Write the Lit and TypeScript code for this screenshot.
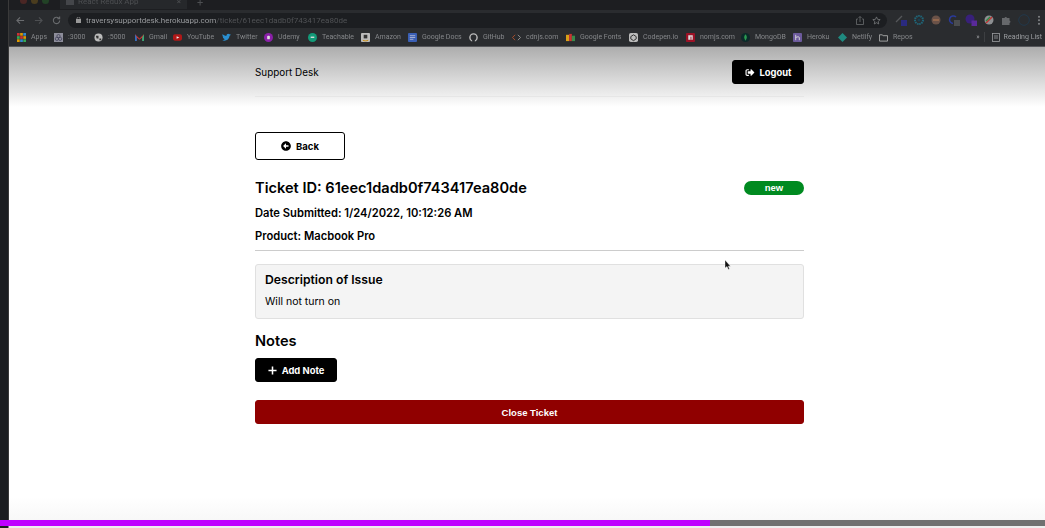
import { LitElement, html, css, svg } from "lit";
import { customElement } from "lit/decorators.js";

const bookmarks: [string, string, number][] = [
  ["Apps", "apps", 37],
  [":3000", "hex", 40],
  [":5000", "globe", 41],
  ["Gmail", "gmail", 38],
  ["YouTube", "yt", 49],
  ["Twitter", "tw", 42],
  ["Udemy", "ud", 44],
  ["Teachable", "te", 53],
  ["Amazon", "am", 47],
  ["Google Docs", "docs", 61],
  ["GitHub", "gh", 43],
  ["cdnjs.com", "code", 54],
  ["Google Fonts", "gf", 63],
  ["Codepen.io", "cp", 57],
  ["nomjs.com", "npm", 55],
  ["MongoDB", "mongo", 52],
  ["Heroku", "her", 45],
  ["Netlify", "net", 41],
  ["Repos", "folder", 40],
];

function favicon(k: string) {
  const shapes: Record<string, unknown> = {
    apps: svg`<rect x="0" y="0" width="3" height="3" fill="#c33"/><rect x="3.500" y="0" width="3" height="3" fill="#d90"/><rect x="7" y="0" width="3" height="3" fill="#38c"/><rect x="0" y="3.500" width="3" height="3" fill="#3a5"/><rect x="3.500" y="3.500" width="3" height="3" fill="#c33"/><rect x="7" y="3.500" width="3" height="3" fill="#d90"/><rect x="0" y="7" width="3" height="3" fill="#d90"/><rect x="3.500" y="7" width="3" height="3" fill="#38c"/><rect x="7" y="7" width="3" height="3" fill="#3a5"/>`,
    hex: svg`<rect width="10" height="10" fill="#8d8d9a"/><circle cx="5" cy="3.500" r="1.800" fill="none" stroke="#3a3a55" stroke-width=".8"/><circle cx="3.200" cy="6.500" r="1.800" fill="none" stroke="#3a3a55" stroke-width=".8"/><circle cx="6.800" cy="6.500" r="1.800" fill="none" stroke="#3a3a55" stroke-width=".8"/>`,
    globe: svg`<circle cx="5" cy="5" r="4.500" fill="#bbb"/><path d="M2 3h3v3H3zM6 6h2v2H6z" fill="#333"/>`,
    gmail: svg`<path d="M0 1.500 5 6l5-4.500V9H8V5L5 7.500 2 5v4H0z" fill="#c33"/><path d="M8 9V5l2-3.500V9z" fill="#3a7"/><path d="M0 9V1.500L2 5v4z" fill="#2f6fc0"/>`,
    yt: svg`<rect y="1.500" width="10" height="7" rx="2" fill="#b01818"/><path d="M4 3.500 7 5 4 6.500z" fill="#eee"/>`,
    tw: svg`<path d="M0 8c4 1.500 8-.5 8.500-5L10 2 8.500 1.500C7 0 5 1 5 3 3 3 1.500 2 .7 1c-.5 1.500 0 3 1 3.500L1 4.500C1 5.500 2 6.500 3 7 2 8 1 8 0 8z" fill="#2a8fd0"/>`,
    ud: svg`<circle cx="5" cy="5" r="5" fill="#8a1fa8"/><rect x="3.500" y="3" width="3" height="4" rx="1" fill="#ddd"/>`,
    te: svg`<circle cx="5" cy="5" r="5" fill="#129a78"/><rect x="3" y="4" width="4" height="1.500" fill="#ddd"/>`,
    am: svg`<rect width="10" height="10" rx="1" fill="#bbb"/><rect x="3" y="2" width="4" height="4" fill="#333"/><path d="M2 8c2 1 4 1 6 0" stroke="#c80" fill="none"/>`,
    docs: svg`<rect width="10" height="10" rx="1" fill="#3a5fb5"/><path d="M2 3h6M2 5h6M2 7h4" stroke="#ccd" stroke-width=".8"/>`,
    gh: svg`<circle cx="5" cy="5" r="4" fill="none" stroke="#bbb" stroke-width="1.600"/><rect x="3.500" y="7" width="3" height="3" fill="#2a2c2f"/>`,
    code: svg`<path d="M3.500 2 .5 5l3 3" stroke="#b5532c" fill="none"/><path d="M6.500 2l3 3-3 3" stroke="#999" fill="none"/>`,
    gf: svg`<rect y="2" width="3.500" height="7" fill="#d9a018"/><rect x="3.500" y="1" width="3" height="8" fill="#c33"/><rect x="6.500" y="3" width="3.500" height="6" fill="#3a8a4a"/>`,
    cp: svg`<rect width="10" height="10" rx="2" fill="#bbb"/><path d="M5 2 8 4v2.500L5 8.500 2 6.500V4z" fill="none" stroke="#222"/>`,
    npm: svg`<rect width="10" height="10" rx="1" fill="#9c1226"/><rect x="2.500" y="2.500" width="5" height="5" fill="#ddd"/><rect x="5" y="4" width="1" height="3.500" fill="#9c1226"/>`,
    mongo: svg`<circle cx="5" cy="5" r="5" fill="#0c2a2a"/><path d="M5 1.500c2 2 2 4.500 0 7-2-2.500-2-5 0-7z" fill="#2a9a50"/>`,
    her: svg`<rect width="10" height="10" rx="1" fill="#6c5a9c"/><path d="M3 2v6M3 5c2-1 4-1 4 0v3" stroke="#ddd" fill="none"/>`,
    net: svg`<path d="M5 0l5 5-5 5-5-5z" fill="#1f8a80"/>`,
    folder: svg`<path d="M.5 2h3l1 1h5v6H.5z" fill="none" stroke="#aaa"/>`,
  };
  return svg`<svg class="fav" viewBox="0 0 10 10" width="9" height="9">${shapes[k]}</svg>`;
}

@customElement("app-root")
export class AppRoot extends LitElement {
  static styles = css`
    :host { display: block; width: 1045px; height: 528px; overflow: hidden; position: relative; background: #fff; font-family: Inter, "Liberation Sans", sans-serif; color: #000; }
    .chrome { height: 47px; background: #2a2c2f; display: flex; flex-direction: column; filter: blur(0.65px); overflow: hidden; }
    .tabs { height: 10px; background: #1d1e21; display: flex; align-items: flex-start; flex: none; overflow: hidden; }
    .lights { display: flex; gap: 4px; padding: 0 0 0 20px; width: 40px; margin-top: -3px; flex: none; box-sizing: content-box; }
    .lights i { width: 7px; height: 7px; border-radius: 50%; display: block; }
    .tab { width: 127px; height: 9px; background: #26282b; display: flex; align-items: center; gap: 4px; padding: 0 6px; box-sizing: border-box; font: 8px/8px Roboto, sans-serif; color: #4d4f52; }
    .tab .t { flex: 1; margin-top: -6px; white-space: nowrap; }
    .tab .ic { width: 8px; height: 5px; background: #44464a; flex: none; align-self: flex-start; }
    .tab .x { margin-top: -6px; }
    .plus { margin-left: 10px; color: #4d4f52; font: 11px/6px Roboto, sans-serif; }
    .toolbar { height: 18px; display: flex; align-items: center; flex: none; padding: 2px 0 0 16px; box-sizing: border-box; color: #77797c; }
    .nav { display: flex; gap: 9px; width: 52px; flex: none; align-items: center; }
    .url { width: 819px; height: 15px; background: #1c1e21; border-radius: 8px; display: flex; align-items: center; padding: 0 6px 0 8px; box-sizing: border-box; font: 8px Roboto, sans-serif; color: #989a9d; white-space: nowrap; gap: 3px; flex: none; }
    .url em { font-style: normal; color: #505255; }
    .url .tools { margin-left: auto; display: flex; gap: 8px; align-items: center; }
    .ext { display: flex; align-items: center; gap: 5.500px; margin-left: 8px; }
    .ext svg { display: block; flex: none; }
    .dots { width: 2px; height: 10px; margin-left: 3px; background: radial-gradient(circle, #77797c 1px, transparent 1.100px) 0 0 / 2px 3.500px; }
    .marks { flex: 1; border-bottom: 1px solid #55565a; display: flex; align-items: center; padding-left: 17px; font: 7px Roboto, sans-serif; color: #85878a; white-space: nowrap; }
    .mark { display: flex; align-items: center; gap: 5px; flex: none; }
    .fav { flex: none; }
    .more { margin-left: auto; display: flex; align-items: center; gap: 4px; padding-right: 3px; color: #9a9c9f; }
    .more i { width: 1px; height: 10px; background: #3d3f42; }
    .rl { display: flex; align-items: center; gap: 4px; margin-left: 3px; }

    .edge { position: absolute; left: 0; top: 0; width: 8px; height: 520px; background: #1b1d20; border-right: 1px solid #3a3a3a; }
    .page { height: 481px; margin-left: 9px; background: linear-gradient(#adadad 0, #f0f0f0 50px, #fff 60px, #fff 450px, #f8f8f8 473px); }
    .container { width: 549px; margin-left: 246px; display: flex; flex-direction: column; align-items: stretch; }

    header { height: 50px; padding-top: 13px; box-sizing: border-box; border-bottom: 1px solid #e6e6e6; display: flex; justify-content: space-between; align-items: flex-start; }
    .brand { font-size: 9.900px; font-weight: 400; line-height: 24px; }
    .btn { display: flex; align-items: center; justify-content: center; gap: 5px; background: #000; color: #fff; border: 1px solid #000; border-radius: 3px; font-weight: 700; font-size: 9.400px; box-sizing: border-box; }
    .logout { width: 72px; height: 24px; }
    .back { width: 90px; height: 28px; margin-top: 35px; background: #fff; color: #000; font-size: 9.500px; align-self: flex-start; }
    .titlerow { display: flex; justify-content: space-between; align-items: center; margin-top: 19px; height: 18px; }
    h2 { margin: 0; font-size: 14.600px; line-height: 18px; font-weight: 600; }
    .badge { width: 60px; height: 14px; border-radius: 7px; background: #008a20; color: #fff; font: 700 9.500px/14px "Liberation Sans", sans-serif; text-align: center; }
    h3 { margin: 0; font-size: 11.200px; line-height: 14px; font-weight: 600; }
    .date { margin-top: 9px; }
    .product { margin-top: 9px; }
    hr { width: 100%; margin: 7px 0 0; border: 0; border-top: 1px solid #ccc; height: 0; }
    .desc { margin-top: 13px; height: 55px; background: #f4f4f4; border: 1px solid #e0e0e0; border-radius: 3px; padding: 7px 9px; box-sizing: border-box; }
    .desc h4 { margin: 0; font-size: 12.200px; line-height: 16px; font-weight: 600; }
    .desc p { margin: 7px 0 0; font-size: 10.500px; line-height: 14px; font-weight: 400; }
    .notes { margin-top: 13px; }
    .add { width: 82px; height: 24px; margin-top: 8px; align-self: flex-start; }
    .close { height: 24px; margin-top: 18px; background: #900000; border-color: #900000; font: 700 9.500px "Liberation Sans", sans-serif; }

    .cursor { position: absolute; left: 724px; top: 260px; }
    .bar { position: absolute; left: 0; right: 0; top: 520px; height: 6px; background: #707070; }
    .bar div { width: 710px; height: 6px; background: #bf00ff; }
    .foot { position: absolute; left: 0; right: 0; top: 526px; height: 2px; background: linear-gradient(90deg, #1b1d20 8px, #eee 9px); }
  `;

  render() {
    return html`
      <div class="chrome">
        <div class="tabs">
          <div class="lights"><i style="background:#4a2624"></i><i style="background:#4a3c1e"></i><i style="background:#224226"></i></div>
          <div class="tab"><span class="ic"></span><span class="t">React Redux App</span><span class="x">×</span></div>
          <div class="plus">+</div>
        </div>
        <div class="toolbar">
          <div class="nav">
            <svg width="9" height="9" viewBox="0 0 10 10" fill="none" stroke="#6a6c6f" stroke-width="1.200"><path d="M9 5H1M4.500 1.500 1 5l3.500 3.500"/></svg>
            <svg width="9" height="9" viewBox="0 0 10 10" fill="none" stroke="#4d4f52" stroke-width="1.200"><path d="M1 5h8M5.500 1.500 9 5 5.500 8.500"/></svg>
            <svg width="9" height="9" viewBox="0 0 10 10" fill="none" stroke="#6a6c6f" stroke-width="1.200"><path d="M8.500 5A3.500 3.500 0 1 1 7.500 2.500M8.500 .5v2.500H6"/></svg>
          </div>
          <div class="url">
            <svg width="5" height="6" viewBox="0 0 5 6"><rect y="2" width="5" height="4" fill="#999"/><path d="M1 2V1.500a1.500 1.500 0 0 1 3 0V2" fill="none" stroke="#999" stroke-width=".7"/></svg>
            <span style="margin-left:2px">traversysupportdesk.herokuapp.com<em>/ticket/61eec1dadb0f743417ea80de</em></span>
            <div class="tools">
              <svg width="8" height="9" viewBox="0 0 8 9" fill="none" stroke="#6a6c6f" stroke-width=".8"><path d="M2 3H.5v5.500h7V3H6M4 6V.5M2.500 2 4 .5 5.500 2"/></svg>
              <svg width="9" height="9" viewBox="0 0 10 10" fill="none" stroke="#77797c" stroke-width=".9"><path d="M5 1l1.200 2.700 2.900.3-2.200 2 .6 2.900L5 7.400 2.500 8.900l.6-2.900-2.200-2 2.900-.3z"/></svg>
            </div>
          </div>
          <div class="ext">
            <svg width="12" height="12" viewBox="0 0 12 12"><path d="M1 8 7 2" stroke="#55575a" stroke-width="1.200"/><rect x="6" y="6" width="6" height="6" fill="#2a2a80"/></svg>
            <svg width="12" height="12" viewBox="0 0 12 12"><circle cx="6" cy="6" r="4" fill="none" stroke="#1f6578" stroke-width="2" stroke-dasharray="1.500 .7"/><circle cx="6" cy="6" r="1.500" fill="#1a4050"/></svg>
            <svg width="12" height="12" viewBox="0 0 12 12"><circle cx="6" cy="6" r="4.500" fill="#6a5248"/><path d="M3 6h6" stroke="#a07050" stroke-width="1.500"/></svg>
            <svg width="12" height="12" viewBox="0 0 12 12"><path d="M8 3A3.800 3.800 0 1 0 5 9.500" fill="none" stroke="#2a3a9a" stroke-width="1.500"/><rect x="6" y="6" width="6" height="6" fill="#4a4c4f"/></svg>
            <svg width="12" height="12" viewBox="0 0 12 12"><circle cx="5" cy="5" r="4.500" fill="#38207a"/><rect x="6.500" y="6.500" width="5.500" height="5.500" fill="#5a2a9a"/></svg>
            <svg width="12" height="12" viewBox="0 0 12 12"><circle cx="6" cy="6" r="4.500" fill="#8d8f92"/><path d="M3 9 9 3" stroke="#c03030" stroke-width="1.500"/><path d="M3 7 7 3" stroke="#2a8a40" stroke-width="1.200"/></svg>
            <svg width="12" height="12" viewBox="0 0 12 12"><path d="M2 4h2.500a1.300 1.300 0 0 1 2.500 0H9.500v2.500a1.300 1.300 0 0 1 0 2.500V11H2z" fill="#66686b"/></svg>
            <svg width="12" height="12" viewBox="0 0 12 12"><circle cx="6" cy="6" r="5.300" fill="none" stroke="#22384a"/></svg>
            <div class="dots"></div>
          </div>
        </div>
        <div class="marks">
          ${bookmarks.map(
            ([label, icon, w]) => html`<div class="mark" style="width:${w}px">${favicon(icon)}<span>${label}</span></div>`
          )}
          <div class="more">
            <span>»</span><i></i>
            <div class="rl"><svg width="8" height="9" viewBox="0 0 8 9" fill="none" stroke="#9a9c9f" stroke-width=".8"><rect x=".5" y=".5" width="7" height="8"/><path d="M2 3h4M2 5h4"/></svg><span>Reading List</span></div>
          </div>
        </div>
      </div>
      <div class="page">
        <div class="container">
          <header>
            <div class="brand">Support Desk</div>
            <div class="btn logout">
              <svg width="10" height="9" viewBox="0 0 512 512" fill="#fff"><path d="M497 273 329 441c-15 15-41 4-41-17v-96H152c-13 0-24-11-24-24v-96c0-13 11-24 24-24h136V88c0-21 26-32 41-17l168 168c9 9 9 25 0 34zM192 436v-40c0-7-5-12-12-12H96c-18 0-32-14-32-32V160c0-18 14-32 32-32h84c7 0 12-5 12-12V76c0-7-5-12-12-12H96c-53 0-96 43-96 96v192c0 53 43 96 96 96h84c7 0 12-5 12-12z"/></svg>
              <span>Logout</span>
            </div>
          </header>
          <div class="btn back">
            <svg width="10" height="10" viewBox="0 0 512 512" fill="#000"><path d="M256 504C119 504 8 393 8 256S119 8 256 8s248 111 248 248-111 248-248 248zm116-292H256v-71c0-11-13-16-21-9L121 239c-9 9-9 25 0 34l114 107c8 8 21 2 21-9v-71h116c7 0 12-5 12-12v-64c0-7-5-12-12-12z"/></svg>
            <span>Back</span>
          </div>
          <div class="titlerow">
            <h2>Ticket ID: 61eec1dadb0f743417ea80de</h2>
            <span class="badge">new</span>
          </div>
          <h3 class="date">Date Submitted: 1/24/2022, 10:12:26 AM</h3>
          <h3 class="product">Product: Macbook Pro</h3>
          <hr />
          <div class="desc">
            <h4>Description of Issue</h4>
            <p>Will not turn on</p>
          </div>
          <h2 class="notes">Notes</h2>
          <div class="btn add">
            <svg width="9" height="9" viewBox="0 0 10 10" stroke="#fff" stroke-width="1.700"><path d="M5 .5v9M.5 5h9"/></svg>
            <span>Add Note</span>
          </div>
          <div class="btn close">Close Ticket</div>
        </div>
      </div>
      <div class="edge"></div>
      <svg class="cursor" width="7" height="10" viewBox="0 0 7 10"><path d="M1 0v8l2-1.500L4.300 9.500 5.500 9 4.300 6.200H6.500z" fill="#111" stroke="#fff" stroke-width=".4"/></svg>
      <div class="bar"><div></div></div>
      <div class="foot"></div>
    `;
  }
}
